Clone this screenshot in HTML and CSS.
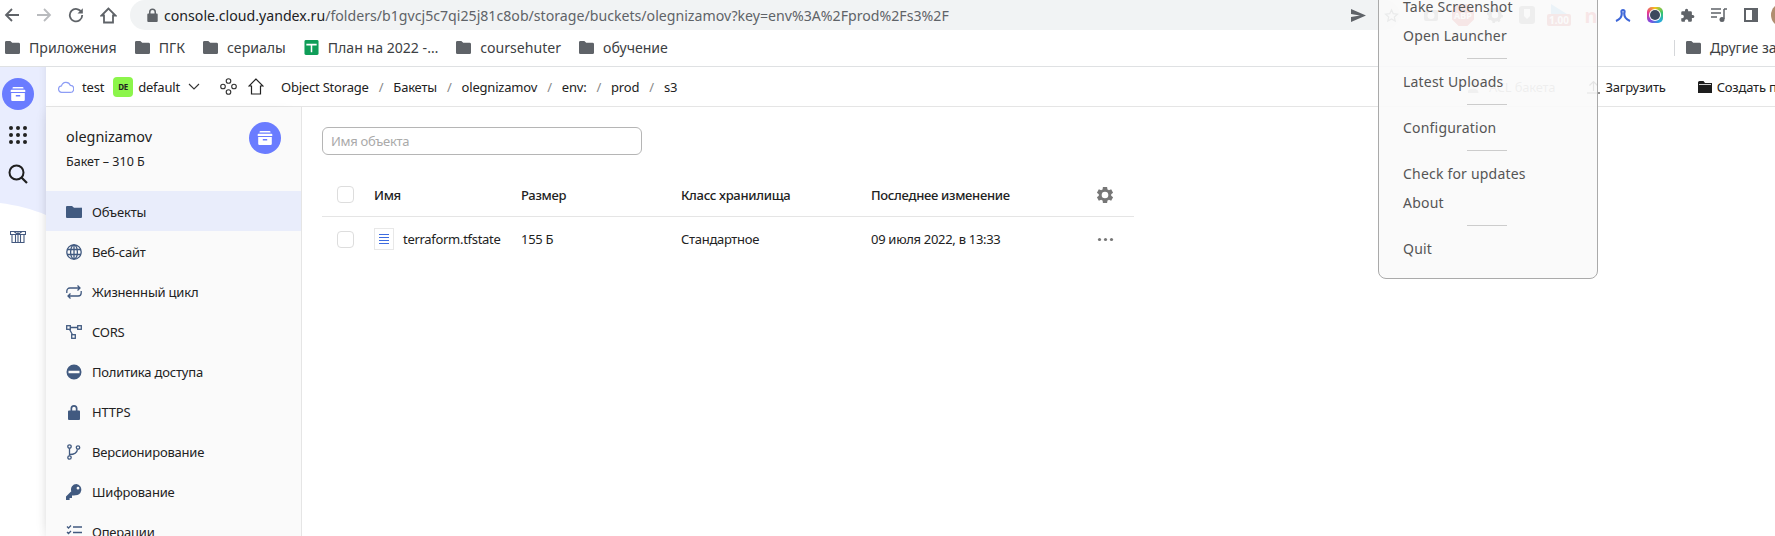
FILE: index.html
```html
<!DOCTYPE html>
<html lang="ru">
<head>
    <meta charset="UTF-8">
    <meta name="viewport" content="width=device-width, initial-scale=1.0">
    <title>Object Storage</title>
    <link rel="stylesheet" href="styles.css">
</head>
<body>
    <svg class="defs" width="0" height="0">
        <symbol id="folder" viewBox="0 0 16 14"><path d="M1.5 0h4.2l2 2h6.8A1.5 1.5 0 0 1 16 3.5v9a1.5 1.5 0 0 1-1.500 1.500h-13A1.500 1.500 0 0 1 0 12.500v-11A1.500 1.500 0 0 1 1.500 0z"/></symbol>
        <symbol id="box" viewBox="0 0 16 16"><path d="M3.500 1h9a1 1 0 0 1 1 1v.6h-11V2a1 1 0 0 1 1-1zM1.500 3.800h13a.8.8 0 0 1 .8.8V6H.7V4.600a.8.800 0 0 1 .8-.8zM1.200 7h13.600v6.800a1.200 1.200 0 0 1-1.200 1.200H2.400a1.200 1.200 0 0 1-1.200-1.200zm4.600 2v1.400h4.400V9z"/></symbol>
    </svg>

    <div class="toolbar">
        <div class="nav-btn"><svg width="16" height="16" viewBox="0 0 16 16"><path d="M15 8H2M8 2 2 8l6 6" class="line-dark"/></svg></div>
        <div class="nav-btn"><svg width="16" height="16" viewBox="0 0 16 16"><path d="M1 8h13M8 2l6 6-6 6" class="line-off"/></svg></div>
        <div class="nav-btn"><svg width="16" height="16" viewBox="0 0 16 16"><path d="M13.600 5.500A6.200 6.200 0 1 0 14.200 8" class="line-dark"/><path d="M14.800 1.200v5.300H9.500z" fill="#5f6368"/></svg></div>
        <div class="nav-btn"><svg width="17" height="17" viewBox="0 0 17 17"><path d="M8.500 1.500 1.500 8.500h2.500v7h9v-7h2.500z" class="line-dark"/></svg></div>
        <div class="omnibox">
            <svg class="lock" width="11" height="14" viewBox="0 0 11 14"><path d="M2 5.500V4a3.500 3.500 0 0 1 7 0v1.500h.7a1 1 0 0 1 1 1V13a1 1 0 0 1-1 1H1.300a1 1 0 0 1-1-1V6.500a1 1 0 0 1 1-1zm1.500 0h4V4a2 2 0 0 0-4 0z" fill="#5f6368"/></svg>
            <span class="url"><span class="host">console.cloud.yandex.ru</span>/folders/b1gvcj5c7qi25j81c8ob/storage/buckets/olegnizamov?key=env%3A%2Fprod%2Fs3%2F</span>
            <svg class="send" width="15" height="13" viewBox="0 0 15 13"><path d="M0 0l15 6.500L0 13V8l9-1.500L0 5z" fill="#5f6368"/></svg>
            <svg class="star" width="15" height="15" viewBox="0 0 24 24"><path d="M12 3l2.800 6.100 6.700.7-5 4.500 1.400 6.600L12 17.500l-5.900 3.400 1.400-6.600-5-4.500 6.700-.7z" fill="none" stroke="#5f6368" stroke-width="2"/></svg>
        </div>
        <div class="exts">
            <div class="ext"><svg width="16" height="16" viewBox="0 0 16 16"><rect x="1" y="3" width="14" height="11" rx="2" fill="#777"/><circle cx="8" cy="8.500" r="3.500" fill="#fff"/></svg></div>
            <div class="ext abp">ABP</div>
            <div class="ext"><svg width="16" height="16" viewBox="0 0 16 16"><circle cx="8" cy="8" r="5" fill="none" stroke="#666" stroke-width="3.500"/><circle cx="8" cy="8" r="7" fill="none" stroke="#666" stroke-width="2" stroke-dasharray="2.500 3"/></svg></div>
            <div class="ext"><svg width="16" height="18" viewBox="0 0 16 18"><rect width="16" height="18" rx="3" fill="#888"/><path d="M5 3h6v7l-3 3-3-3z" fill="#fff"/></svg></div>
            <div class="ext speed"><svg width="16" height="10" viewBox="0 0 16 10"><path d="M0 0l16 10H0z" fill="#6ab7e8"/></svg><span class="speed-num">1.00</span></div>
            <div class="ext ext-n">n</div>
            <div class="ext"><svg width="16" height="14" viewBox="0 0 16 14"><path d="M1 13C5 11.500 7.500 8 6.500 4C6 1.500 10 1.500 9.500 4C8.500 8 11 11.500 15 13" fill="none" stroke="#3d66d8" stroke-width="2.200"/></svg></div>
            <div class="ext"><div class="lens"><div class="lens-in"></div></div></div>
            <div class="ext"><svg width="15" height="15" viewBox="0 0 24 24"><path d="M20.500 11H19V7a2 2 0 0 0-2-2h-4V3.500a2.500 2.500 0 0 0-5 0V5H4a2 2 0 0 0-2 2v3.800h1.500a2.700 2.700 0 0 1 0 5.400H2V20a2 2 0 0 0 2 2h3.800v-1.500a2.700 2.700 0 0 1 5.400 0V22H17a2 2 0 0 0 2-2v-4h1.500a2.500 2.500 0 0 0 0-5z" fill="#5f6368"/></svg></div>
            <div class="ext"><svg width="16" height="14" viewBox="0 0 16 14"><path d="M0 1h10M0 5h10M0 9h6" stroke="#5f6368" stroke-width="1.500" fill="none"/><path d="M13 1h3M13 1v10" stroke="#5f6368" stroke-width="1.500" fill="none"/><circle cx="11" cy="11.500" r="2.500" fill="#5f6368"/></svg></div>
            <div class="ext"><svg width="14" height="14" viewBox="0 0 14 14"><path d="M0 0h14v14H0zM2 2v10h6V2z" fill="#5f6368"/></svg></div>
            <div class="ext avatar"></div>
        </div>
    </div>

    <div class="bookmarks">
        <div class="bm"><svg class="bm-folder"><use href="#folder"/></svg>Приложения</div>
        <div class="bm"><svg class="bm-folder"><use href="#folder"/></svg>ПГК</div>
        <div class="bm"><svg class="bm-folder"><use href="#folder"/></svg>сериалы</div>
        <div class="bm"><svg class="bm-folder" viewBox="0 0 15 16"><rect width="15" height="16" rx="1.500" fill="#0f9d58"/><path d="M2 4h11v1.800H8.300V13H6.700V5.800H2z" fill="#fff"/></svg>План на 2022 -…</div>
        <div class="bm"><svg class="bm-folder"><use href="#folder"/></svg>coursehuter</div>
        <div class="bm"><svg class="bm-folder"><use href="#folder"/></svg>обучение</div>
        <div class="bm-other">
            <div class="bm"><svg class="bm-folder"><use href="#folder"/></svg>Другие закладки</div>
        </div>
    </div>

    <div class="console">
        <div class="rail">
            <svg class="rail-bg" width="46" height="469" viewBox="0 0 46 469"><path d="M0 0h46v148C32 142 16 138 0 136z" fill="#e9edfe"/></svg>
            <div class="rail-logo"><svg class="box-white"><use href="#box"/></svg></div>
            <div class="rail-dots"><span></span><span></span><span></span><span></span><span></span><span></span><span></span><span></span><span></span></div>
            <svg class="rail-search" width="20" height="20" viewBox="0 0 20 20"><circle cx="8.500" cy="8.500" r="7" fill="none" stroke="#1f1f1f" stroke-width="2"/><path d="M13.500 13.500l5.500 5.500" stroke="#1f1f1f" stroke-width="2.200"/></svg>
            <svg class="rail-gift" width="16" height="13" viewBox="0 0 16 13"><path d="M.5 1.500h15v3h-1.500v8H2v-8H.5zM8 1.500v11M5.500 4.500v8M10.500 4.500v8M.5 4.500h15M4 1.500 8 4.500l4-3" fill="none" stroke="#44597f" stroke-width="1.100"/></svg>
        </div>

        <div class="work">
            <div class="topbar">
                <svg class="cloud" width="16" height="13" viewBox="0 0 16 13"><path d="M4 12.300a3.200 3.200 0 0 1-.5-6.400 4.600 4.600 0 0 1 8.800-.6 3.500 3.500 0 0 1-.2 7z" fill="none" stroke="#8d9df5" stroke-width="1.200"/></svg>
                <span class="cloud-name">test</span>
                <span class="badge">DE</span>
                <span class="folder-name">default</span>
                <svg class="chevron" width="12" height="7" viewBox="0 0 12 7"><path d="M1 1l5 5 5-5" fill="none" stroke="#333" stroke-width="1.100"/></svg>
                <svg class="nodes" width="17" height="17" viewBox="0 0 17 17"><g fill="none" stroke="#333" stroke-width="1.100"><circle cx="8.500" cy="3" r="2.300"/><circle cx="3" cy="8.500" r="2.300"/><circle cx="14" cy="8.500" r="2.300"/><circle cx="8.500" cy="14" r="2.300"/></g></svg>
                <svg class="home" width="16" height="17" viewBox="0 0 16 17"><path d="M8 1 1 8h2.500v8h9V8H15z" fill="none" stroke="#222" stroke-width="1.200"/></svg>
                <div class="crumbs">
                    <span>Object Storage</span><i>/</i><span>Бакеты</span><i>/</i><span>olegnizamov</span><i>/</i><span>env:</span><i>/</i><span>prod</span><i>/</i><span>s3</span>
                </div>
                <div class="actions">
                    <span class="act act-off"><svg width="16" height="12" viewBox="0 0 16 12"><circle cx="5" cy="3" r="3" fill="#999"/><path d="M0 12c0-3 2-4 5-4s5 1 5 4zM9 3h7" fill="#999" stroke="#999"/></svg>ACL бакета</span>
                    <span class="act act-up"><svg width="13" height="14" viewBox="0 0 13 14"><path d="M6.500 11V1.500M2.500 5.500l4-4 4 4M0 13h13" fill="none" stroke="#222" stroke-width="1.200"/></svg>Загрузить</span>
                    <span class="act act-new"><svg width="14" height="12" viewBox="0 0 14 12"><path d="M0 1.500A1.500 1.500 0 0 1 1.500 0h4l1.500 2h7v10H0z" fill="#1e1e1e"/><path d="M1 3.500h12" stroke="#fff" stroke-width=".8"/></svg>Создать папку</span>
                </div>
            </div>

            <div class="content">
                <div class="sidebar">
                    <div class="bucket">
                        <div>
                            <div class="bucket-name">olegnizamov</div>
                            <div class="bucket-size">Бакет – 310 Б</div>
                        </div>
                        <div class="bucket-logo"><svg class="box-white"><use href="#box"/></svg></div>
                    </div>
                    <div class="menu-row active"><svg class="ic" viewBox="0 0 16 16"><path d="M1 2h5l2 1.800h6.500A1 1 0 0 1 16 5v8a1 1 0 0 1-1 1H1a1 1 0 0 1-1-1V3a1 1 0 0 1 1-1z"/></svg>Объекты</div>
                    <div class="menu-row"><svg class="ic ic-line" viewBox="0 0 16 16"><circle cx="8" cy="8" r="7.200"/><ellipse cx="8" cy="8" rx="3.400" ry="7.200"/><path d="M8 .8v14.400M1 5.500h14M1 10.500h14"/></svg>Веб-сайт</div>
                    <div class="menu-row"><svg class="ic ic-line" viewBox="0 0 16 16"><path d="M.8 9V7a3 3 0 0 1 3-3h10M11.500 1.500 14 4l-2.500 2.500M15.200 7v2a3 3 0 0 1-3 3H2M4.500 9.500 2 12l2.500 2.500"/></svg>Жизненный цикл</div>
                    <div class="menu-row"><svg class="ic ic-line" viewBox="0 0 16 16"><rect x=".7" y="1.700" width="3.600" height="3.600"/><rect x="11.700" y="1.700" width="3.600" height="3.600"/><rect x="5.700" y="10.700" width="3.600" height="3.600"/><path d="M4.300 3.500h7.400M3.500 5.300l3 5.400"/></svg>CORS</div>
                    <div class="menu-row"><svg class="ic" viewBox="0 0 16 16"><path d="M8 .5a7.500 7.500 0 1 0 0 15 7.500 7.500 0 0 0 0-15zM2.500 6.700h11v2.600h-11z" fill-rule="evenodd"/></svg>Политика доступа</div>
                    <div class="menu-row"><svg class="ic" viewBox="0 0 16 16"><path d="M4.500 6.500V4.500a3.500 3.500 0 0 1 7 0v2h1.500a1 1 0 0 1 1 1V15a1 1 0 0 1-1 1H3a1 1 0 0 1-1-1V7.500a1 1 0 0 1 1-1zm1.700 0h3.600v-2a1.800 1.800 0 0 0-3.600 0z"/></svg>HTTPS</div>
                    <div class="menu-row"><svg class="ic ic-line" viewBox="0 0 16 16"><circle cx="3.500" cy="2.500" r="1.700"/><circle cx="3.500" cy="13.500" r="1.700"/><circle cx="12" cy="3.500" r="1.700"/><path d="M3.500 4.200v7.600M3.500 10.500c4.500 0 7.500-1.500 8-5.200"/></svg>Версионирование</div>
                    <div class="menu-row"><svg class="ic" viewBox="0 0 16 16"><path d="M10.500 0a5.500 5.500 0 0 0-5.200 7.300L0 12.600V16h3.600v-2H6v-2.400h2.400l.4-.4A5.500 5.500 0 1 0 10.500 0zm1.500 2.800a1.400 1.400 0 1 1 0 2.800 1.400 1.400 0 0 1 0-2.800z" fill-rule="evenodd"/></svg>Шифрование</div>
                    <div class="menu-row"><svg class="ic ic-line" viewBox="0 0 16 16"><path d="M1 2.500l1.500 1.500L5 1.500M1 8l1.500 1.500L5 7M1 13.500 2.500 15 5 12.500M7 3h9M7 8.500h9M7 14h9"/></svg>Операции</div>
                </div>

                <div class="main">
                    <div class="search">Имя объекта</div>
                    <div class="tbl">
                        <div class="tbl-row tbl-head">
                            <span class="check"></span>
                            <span>Имя</span>
                            <span>Размер</span>
                            <span>Класс хранилища</span>
                            <span>Последнее изменение</span>
                            <svg class="gear" width="20" height="20" viewBox="0 0 24 24"><path d="M19.400 13a7.500 7.500 0 0 0 0-2l2.300-1.800-2.300-4-2.700 1.100a7.500 7.500 0 0 0-1.700-1L14.500 2.500h-5l-.4 2.800a7.500 7.500 0 0 0-1.700 1L4.600 5.200l-2.300 4L4.600 11a7.500 7.500 0 0 0 0 2l-2.300 1.800 2.300 4 2.800-1.100c.5.400 1.100.7 1.700 1l.4 2.800h5l.5-2.800c.6-.3 1.200-.6 1.700-1l2.700 1.100 2.300-4zM12 16a4 4 0 1 1 0-8 4 4 0 0 1 0 8z" fill="#777" fill-rule="evenodd"/></svg>
                        </div>
                        <div class="tbl-row">
                            <span class="check"></span>
                            <span class="file"><span class="file-ic"><svg width="10" height="10" viewBox="0 0 10 10"><path d="M0 .5h10M0 3.500h10M0 6.500h10M0 9.500h10" stroke="#3d6be0"/></svg></span>terraform.tfstate</span>
                            <span>155 Б</span>
                            <span>Стандартное</span>
                            <span>09 июля 2022, в 13:33</span>
                            <svg class="dots" width="17" height="5" viewBox="0 0 17 5"><circle cx="2.500" cy="2.500" r="1.600" fill="#777"/><circle cx="8.500" cy="2.500" r="1.600" fill="#777"/><circle cx="14.500" cy="2.500" r="1.600" fill="#777"/></svg>
                        </div>
                    </div>
                </div>
            </div>
        </div>
    </div>

    <div class="tray-menu">
        <div class="tray-item">Take Screenshot</div>
        <div class="tray-item">Open Launcher</div>
        <div class="tray-sep"></div>
        <div class="tray-item">Latest Uploads</div>
        <div class="tray-sep"></div>
        <div class="tray-item">Configuration</div>
        <div class="tray-sep"></div>
        <div class="tray-item">Check for updates</div>
        <div class="tray-item">About</div>
        <div class="tray-sep"></div>
        <div class="tray-item">Quit</div>
    </div>
</body>
</html>
```

FILE: styles.css
```css
html, body {
    height: 536px;
    overflow: hidden;
}
body {
    position: relative;
    margin: 0;
    padding: 0;
    background: #fff;
    font-family: "Noto Sans", sans-serif;
    color: #222;
}
.defs {
    position: absolute;
}

/* browser chrome */
.toolbar {
    height: 30px;
    display: flex;
    align-items: center;
    overflow: hidden;
}
.nav-btn {
    width: 24px;
    margin-right: 8px;
    display: flex;
    justify-content: center;
    flex: none;
}
.line-dark {
    fill: none;
    stroke: #5f6368;
    stroke-width: 1.8;
}
.line-off {
    fill: none;
    stroke: #b9bbbe;
    stroke-width: 1.8;
}
.omnibox {
    margin-left: 2px;
    width: 1270px;
    height: 30px;
    flex: none;
    display: flex;
    align-items: center;
    background: #f1f3f4;
    border-radius: 15px;
    padding: 0 1px 0 17px;
    box-sizing: border-box;
}
.lock {
    margin-right: 6px;
}
.url {
    color: #5f6368;
    font-size: 14.15px;
    white-space: nowrap;
}
.host {
    color: #202124;
}
.send {
    margin-left: auto;
    margin-right: 18px;
}
.exts {
    margin-left: 19px;
    display: flex;
    flex: none;
    gap: 8px;
    align-items: center;
}
.ext {
    width: 24px;
    height: 24px;
    display: flex;
    flex-direction: column;
    align-items: center;
    justify-content: center;
    flex: none;
}
.abp {
    width: 22px;
    height: 22px;
    margin: 0 1px;
    background: #d83a3a;
    clip-path: polygon(30% 0, 70% 0, 100% 30%, 100% 70%, 70% 100%, 30% 100%, 0 70%, 0 30%);
    color: #fff;
    font-size: 9px;
    font-weight: 700;
}
.speed-num {
    background: #c94a4a;
    color: #fff;
    font-size: 10px;
    line-height: 12px;
    font-weight: 700;
    padding: 0 2px;
    border-radius: 2px;
}
.ext-n {
    color: #e0393e;
    font-size: 20px;
    font-weight: 700;
}
.lens {
    width: 16px;
    height: 16px;
    padding: 3px;
    box-sizing: border-box;
    border-radius: 5px;
    background: conic-gradient(#f5c518, #35c46b, #27a9e0, #7d4ce0, #e8368f, #f5c518);
}
.lens-in {
    width: 10px;
    height: 10px;
    border-radius: 50%;
    background: #3c4a5e;
    box-shadow: 0 0 0 1px #fff;
}
.avatar {
    border-radius: 50%;
    background: #b08e70;
}

.bookmarks {
    height: 37px;
    box-sizing: border-box;
    padding: 0 0 1px 5px;
    display: flex;
    align-items: center;
    gap: 18px;
    border-bottom: 1px solid #dfe1e3;
    font-size: 14.1px;
    color: #3c4043;
}
.bm {
    display: flex;
    align-items: center;
    gap: 9px;
    white-space: nowrap;
    flex: none;
}
.bm-folder {
    width: 15px;
    height: 15px;
    fill: #5f6368;
}
.bm-other {
    margin-left: auto;
    width: 101px;
    height: 16px;
    flex: none;
    box-sizing: border-box;
    border-left: 1px solid #d5d7da;
    padding-left: 11px;
    display: flex;
    align-items: center;
    overflow: hidden;
}

/* console layout */
.console {
    display: flex;
    height: 469px;
}
.rail {
    width: 46px;
    flex: none;
    position: relative;
    display: flex;
    flex-direction: column;
    align-items: center;
    box-shadow: inset -8px 0 8px -8px rgba(0, 0, 0, 0.08);
}
.rail-bg {
    position: absolute;
    top: 0;
    left: 0;
    z-index: -1;
}
.rail-logo {
    margin-top: 11px;
    margin-left: -10px;
    width: 32px;
    height: 32px;
    border-radius: 50%;
    background: #6a7cff;
    display: flex;
    align-items: center;
    justify-content: center;
}
.box-white {
    width: 16px;
    height: 16px;
    fill: #fff;
}
.rail-dots {
    margin-top: 16px;
    margin-left: -10px;
    width: 18px;
    display: grid;
    grid-template-columns: repeat(3, 4px);
    grid-auto-rows: 4px;
    justify-content: space-between;
    row-gap: 3px;
}
.rail-dots span {
    background: #222;
    border-radius: 50%;
}
.rail-search {
    margin-top: 20px;
    margin-left: -10px;
}
.rail-gift {
    margin-top: 46px;
    margin-left: -10px;
}
.work {
    flex: 1;
    min-width: 0;
    display: flex;
    flex-direction: column;
}
.topbar {
    height: 40px;
    flex: none;
    box-sizing: border-box;
    border-bottom: 1px solid #e5e5e5;
    padding-left: 12px;
    display: flex;
    align-items: center;
    font-size: 13px;
    letter-spacing: -0.2px;
    color: #222;
    white-space: nowrap;
}
.cloud {
    margin-right: 8px;
}
.badge {
    width: 20px;
    height: 20px;
    margin: 0 5px 0 9px;
    border-radius: 4px;
    background: #8cf54b;
    font-size: 8px;
    font-weight: 700;
    line-height: 20px;
    text-align: center;
}
.chevron {
    margin-left: 8px;
}
.nodes {
    margin-left: 20px;
}
.home {
    margin-left: 11px;
}
.crumbs {
    margin-left: 17px;
    display: flex;
    gap: 10px;
}
.crumbs i {
    font-style: normal;
    color: #888;
}
.actions {
    margin-left: auto;
    width: 307px;
    flex: none;
    display: flex;
    align-items: center;
    overflow: hidden;
}
.act {
    display: flex;
    align-items: center;
    gap: 5px;
    flex: none;
}
.act-up {
    margin-left: 32px;
}
.act-new {
    margin-left: 32px;
}
.act-off {
    color: #888;
}
.content {
    flex: 1;
    display: flex;
    min-height: 0;
}
.sidebar {
    width: 256px;
    flex: none;
    box-sizing: border-box;
    background: #fafafa;
    border-right: 1px solid #e5e5e5;
    box-shadow: -6px 0 12px -6px rgba(0, 0, 0, 0.08);
    font-size: 13px;
    letter-spacing: -0.2px;
}
.bucket {
    height: 84px;
    box-sizing: border-box;
    padding: 7px 20px 0;
    display: flex;
    justify-content: space-between;
    align-items: flex-start;
    letter-spacing: 0;
}
.bucket-name {
    font-size: 14.4px;
    line-height: 20px;
    margin-top: 13px;
}
.bucket-size {
    font-size: 12.5px;
    line-height: 18px;
    margin-top: 6px;
}
.bucket-logo {
    width: 32px;
    height: 32px;
    margin: 8px 0 0;
    border-radius: 50%;
    background: #6a7cff;
    display: flex;
    align-items: center;
    justify-content: center;
}
.menu-row {
    height: 40px;
    display: flex;
    align-items: center;
    padding-left: 20px;
    gap: 10px;
    padding-top: 1px;
    box-sizing: border-box;
}
.menu-row.active {
    background: #e9edfb;
}
.ic {
    width: 16px;
    height: 16px;
    fill: #415a80;
    flex: none;
}
.ic-line {
    fill: none;
    stroke: #415a80;
    stroke-width: 1.3;
}
.main {
    flex: 1;
    padding: 20px;
    font-size: 13px;
    letter-spacing: -0.3px;
}
.search {
    width: 320px;
    height: 28px;
    box-sizing: border-box;
    border: 1px solid #b5b5b5;
    border-radius: 6px;
    padding: 0 8px;
    line-height: 26px;
    color: #aaa;
}
.tbl {
    margin-top: 18px;
    width: 812px;
}
.tbl-row {
    display: grid;
    grid-template-columns: 52px 147px 160px 190px 226px 37px;
    align-items: center;
    height: 44px;
}
.tbl-head {
    font-weight: 500;
    border-bottom: 1px solid #e5e5e5;
    height: 43px;
}
.gear {
    margin-left: -2.5px;
}
.check {
    width: 17px;
    height: 17px;
    margin-left: 15px;
    box-sizing: border-box;
    border: 1px solid #ddd;
    border-radius: 4px;
}
.file {
    display: flex;
    align-items: center;
    gap: 9px;
}
.file-ic {
    width: 20px;
    height: 22px;
    box-sizing: border-box;
    border: 1px solid #e8e8e8;
    display: flex;
    align-items: center;
    justify-content: center;
}

/* tray popup sits over the whole page */
.tray-menu {
    position: absolute;
    top: -9px;
    left: 1378px;
    width: 220px;
    height: 288px;
    box-sizing: border-box;
    border: 1px solid #aaa;
    border-radius: 0 0 8px 8px;
    background: rgba(250, 250, 250, 0.9);
    padding-left: 24px;
    font-size: 14px;
    color: #555;
}
.tray-item {
    height: 29px;
    line-height: 29px;
    letter-spacing: 0.2px;
}
.tray-sep {
    width: 40px;
    height: 17px;
    margin-left: 64px;
    position: relative;
}
.tray-sep::after {
    content: "";
    position: absolute;
    top: 8px;
    left: 0;
    width: 40px;
    height: 1px;
    background: #ccc;
}
```
